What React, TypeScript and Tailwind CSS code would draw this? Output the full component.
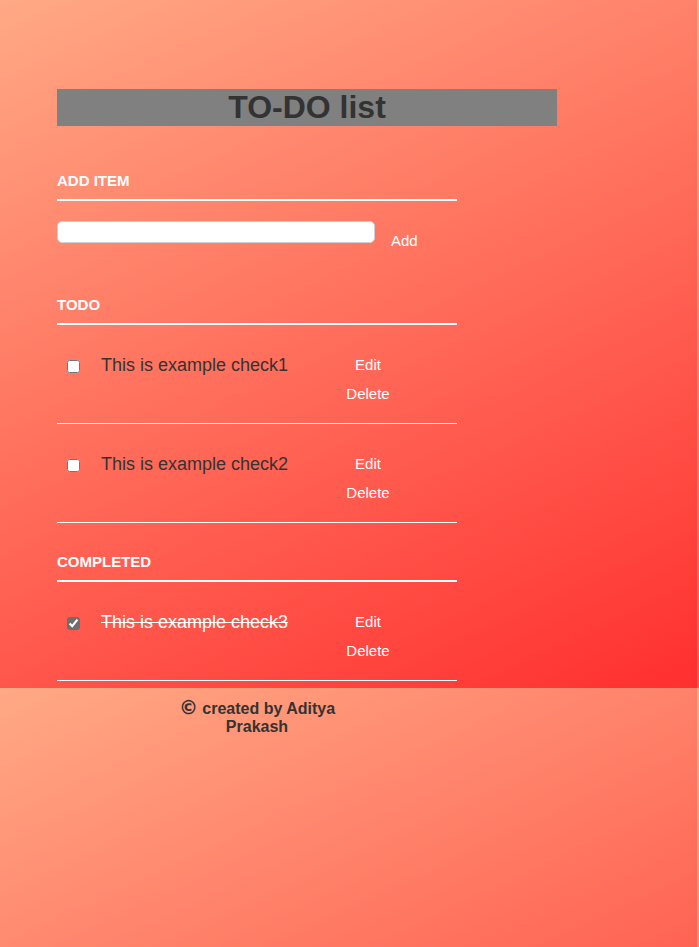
import React from 'react';

type Item = { id: number; text: string; done: boolean };

const items: Item[] = [
  { id: 1, text: 'This is example check1', done: false },
  { id: 2, text: 'This is example check2', done: false },
  { id: 3, text: 'This is example check3', done: true },
];

const Heading: React.FC<{ title: string; className?: string }> = ({ title, className }) => (
  <h3 className={`w-[400px] border-b-2 border-white pb-[10px] text-[15px] font-bold leading-[17px] text-white ${className ?? ''}`}>
    {title}
  </h3>
);

const Row: React.FC<{ item: Item }> = ({ item }) => (
  <li className="flex w-[400px] items-start border-b border-white pb-[21px]">
    <input
      type="checkbox"
      defaultChecked={item.done}
      className="ml-[10px] mt-[35px] h-[13px] w-[13px] shrink-0 accent-[#6e6e6e]"
    />
    <label
      className={`ml-[21px] mt-[30px] w-[237px] text-[18px] leading-[21px] ${
        item.done ? 'text-white line-through' : 'text-[#333]'
      }`}
    >
      {item.text}
    </label>
    <div className="mt-[31px] flex w-[60px] flex-col items-center gap-[12px] text-[15px] leading-[17px] text-white">
      <button>Edit</button>
      <button>Delete</button>
    </div>
  </li>
);

export default function App() {
  return (
    <div className="min-h-[947px] bg-[linear-gradient(155deg,#ffa985,#ff2f2f)] bg-size-[697px_688px] bg-repeat pl-[57px] pt-[89px] font-['Liberation_Sans',Arial,sans-serif]">
      <h1 className="w-[500px] bg-[#808080] text-center text-[32px] font-bold leading-[37px] text-[#333]">TO-DO list</h1>

      <Heading title="ADD ITEM" className="mt-[46px]" />
      <div className="mt-[20px] flex items-start">
        <input type="text" className="h-[22px] w-[318px] rounded-[5px] border border-[#d0d0d0] bg-white" />
        <button className="ml-[16px] mt-[11px] text-[15px] leading-[17px] text-white">Add</button>
      </div>

      <Heading title="TODO" className="mt-[47px]" />
      <ul>
        {items.filter(i => !i.done).map(i => (
          <Row key={i.id} item={i} />
        ))}
      </ul>

      <Heading title="COMPLETED" className="mt-[30px]" />
      <ul>
        {items.filter(i => i.done).map(i => (
          <Row key={i.id} item={i} />
        ))}
      </ul>

      <div className="w-[400px]">
        <p className="mx-auto mt-[17px] w-[180px] text-center text-[16px] font-bold leading-[18px] text-[#333]">
          <span className="font-['DejaVu_Sans',sans-serif] text-[19px] leading-none">©</span> created by Aditya Prakash
        </p>
      </div>
    </div>
  );
}
